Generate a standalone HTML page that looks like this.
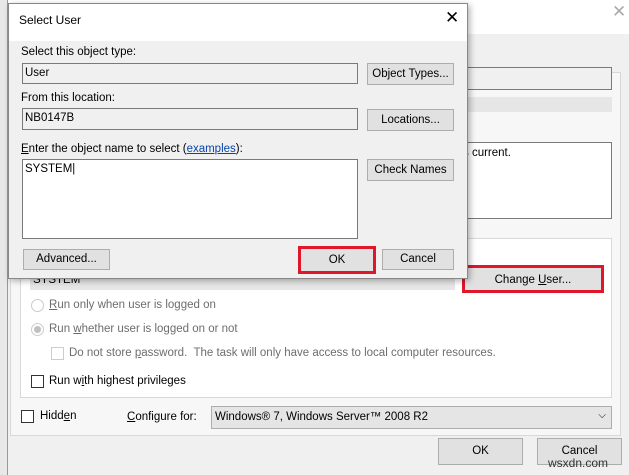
<!DOCTYPE html><html><head><style>
*{box-sizing:border-box;margin:0;padding:0}
body{width:629px;height:475px;overflow:hidden;background:#f0f0f0;font-family:"Liberation Sans",sans-serif;font-size:11.5px;color:#000;position:relative}
.a{position:absolute}
.btn{position:absolute;background:#e1e1e1;border:1px solid #adadad;text-align:center;font-size:11.5px}
.fld{position:absolute;background:#f0f0f0;border:1px solid #7a7a7a;padding:3px 2px;font-size:11.5px}
.g{color:#6d6d6d}
.cb{position:absolute;width:13px;height:13px;border:1px solid #333;background:#fff}
</style></head><body>
<div class="a" style="left:0;top:0;width:629px;height:34px;background:#fff"></div>
<div class="a" style="left:612px;top:2px;font-size:17px;color:#aaa">✕</div>
<div class="a" style="left:0;top:0;width:8px;height:475px;background:#e8e8e8;border-right:1px solid #999"></div>
<div class="a" style="left:10px;top:72px;width:611px;height:364px;background:#f7f7f7;border:1px solid #d8d8d8"></div>
<div class="fld" style="left:460px;top:67px;width:152px;height:23px;background:#f0f0f0"></div>
<div class="a" style="left:460px;top:97px;width:152px;height:15px;background:#e6e6e6"></div>
<div class="a" style="left:460px;top:142px;width:152px;height:77px;background:#fff;border:1px solid #7a7a7a"></div>
<div class="a" style="left:463px;top:147px">s current.</div>
<div class="a" style="left:20px;top:238px;width:592px;height:160px;border:1px solid #d8d8d8;background:#fff"></div>
<div class="a" style="left:30px;top:268px;width:425px;height:22px;background:#e6e6e6;padding:6px 3px">SYSTEM</div>
<div class="btn" style="left:462px;top:265px;width:142px;height:28px;border:3px solid #e0162b;padding-top:6px">Change <u>U</u>ser...</div>
<div class="a" style="left:31px;top:299px;width:13px;height:13px;border:1px solid #ccc;border-radius:50%"></div>
<div class="a g" style="left:49px;top:299px"><u>R</u>un only when user is logged on</div>
<div class="a" style="left:31px;top:323px;width:13px;height:13px;border:1px solid #ccc;border-radius:50%;background:radial-gradient(#c0c0c0 3px,#fff 4px)"></div>
<div class="a g" style="left:49px;top:323px">Run <u>w</u>hether user is logged on or not</div>
<div class="a" style="left:51px;top:347px;width:13px;height:13px;border:1px solid #ccc"></div>
<div class="a g" style="left:69px;top:347px">Do not store <u>p</u>assword.&nbsp; The task will only have access to local computer resources.</div>
<div class="cb" style="left:31px;top:375px"></div>
<div class="a" style="left:49px;top:375px">Run w<u>i</u>th highest privileges</div>
<div class="cb" style="left:21px;top:410px"></div>
<div class="a" style="left:40px;top:410px">Hidd<u>e</u>n</div>
<div class="a" style="left:127px;top:411px"><u>C</u>onfigure for:</div>
<div class="a" style="left:211px;top:406px;width:401px;height:23px;background:#e5e5e5;border:1px solid #adadad;padding:4px 3px">Windows® 7, Windows Server™ 2008 R2<span style="position:absolute;right:5px;top:3px;font-size:10px">⌵</span></div>
<div class="btn" style="left:438px;top:438px;width:85px;height:27px;padding-top:6px">OK</div>
<div class="btn" style="left:537px;top:438px;width:85px;height:27px;padding-top:6px">Cancel</div>
<div class="a" style="left:548px;top:456px;font-size:12px;color:#333">wsxdn.com</div>

<div class="a" style="left:8px;top:3px;width:460px;height:276px;background:#f0f0f0;border:1px solid #888;box-shadow:2px 2px 6px rgba(0,0,0,.3)">
<div class="a" style="left:0;top:0;width:458px;height:37px;background:#fff"></div>
<div class="a" style="left:10px;top:9px;font-size:12px">Select User</div>
<div class="a" style="left:436px;top:4px;font-size:17px">✕</div>
<div class="a" style="left:12px;top:42px">Select this object type:</div>
<div class="fld" style="left:13px;top:59px;width:336px;height:21px">User</div>
<div class="btn" style="left:358px;top:59px;width:87px;height:22px;padding-top:4px">Object Types...</div>
<div class="a" style="left:12px;top:88px">From this location:</div>
<div class="fld" style="left:13px;top:104px;width:336px;height:22px">NB0147B</div>
<div class="btn" style="left:358px;top:105px;width:87px;height:22px;padding-top:4px">Locations...</div>
<div class="a" style="left:12px;top:139px"><u>E</u>nter the object name to select (<span style="color:#0645ad;text-decoration:underline">examples</span>):</div>
<div class="a" style="left:13px;top:155px;width:336px;height:80px;background:#fff;border:1px solid #7a7a7a;padding:3px 2px">SYSTEM|</div>
<div class="btn" style="left:358px;top:155px;width:87px;height:22px;padding-top:4px">Check Names</div>
<div class="btn" style="left:14px;top:245px;width:87px;height:21px;padding-top:3px">Advanced...</div>
<div class="btn" style="left:289px;top:242px;width:78px;height:28px;border:3px solid #e0162b;padding-top:5px">OK</div>
<div class="btn" style="left:373px;top:245px;width:72px;height:21px;padding-top:3px">Cancel</div>
</div>
</body></html>
